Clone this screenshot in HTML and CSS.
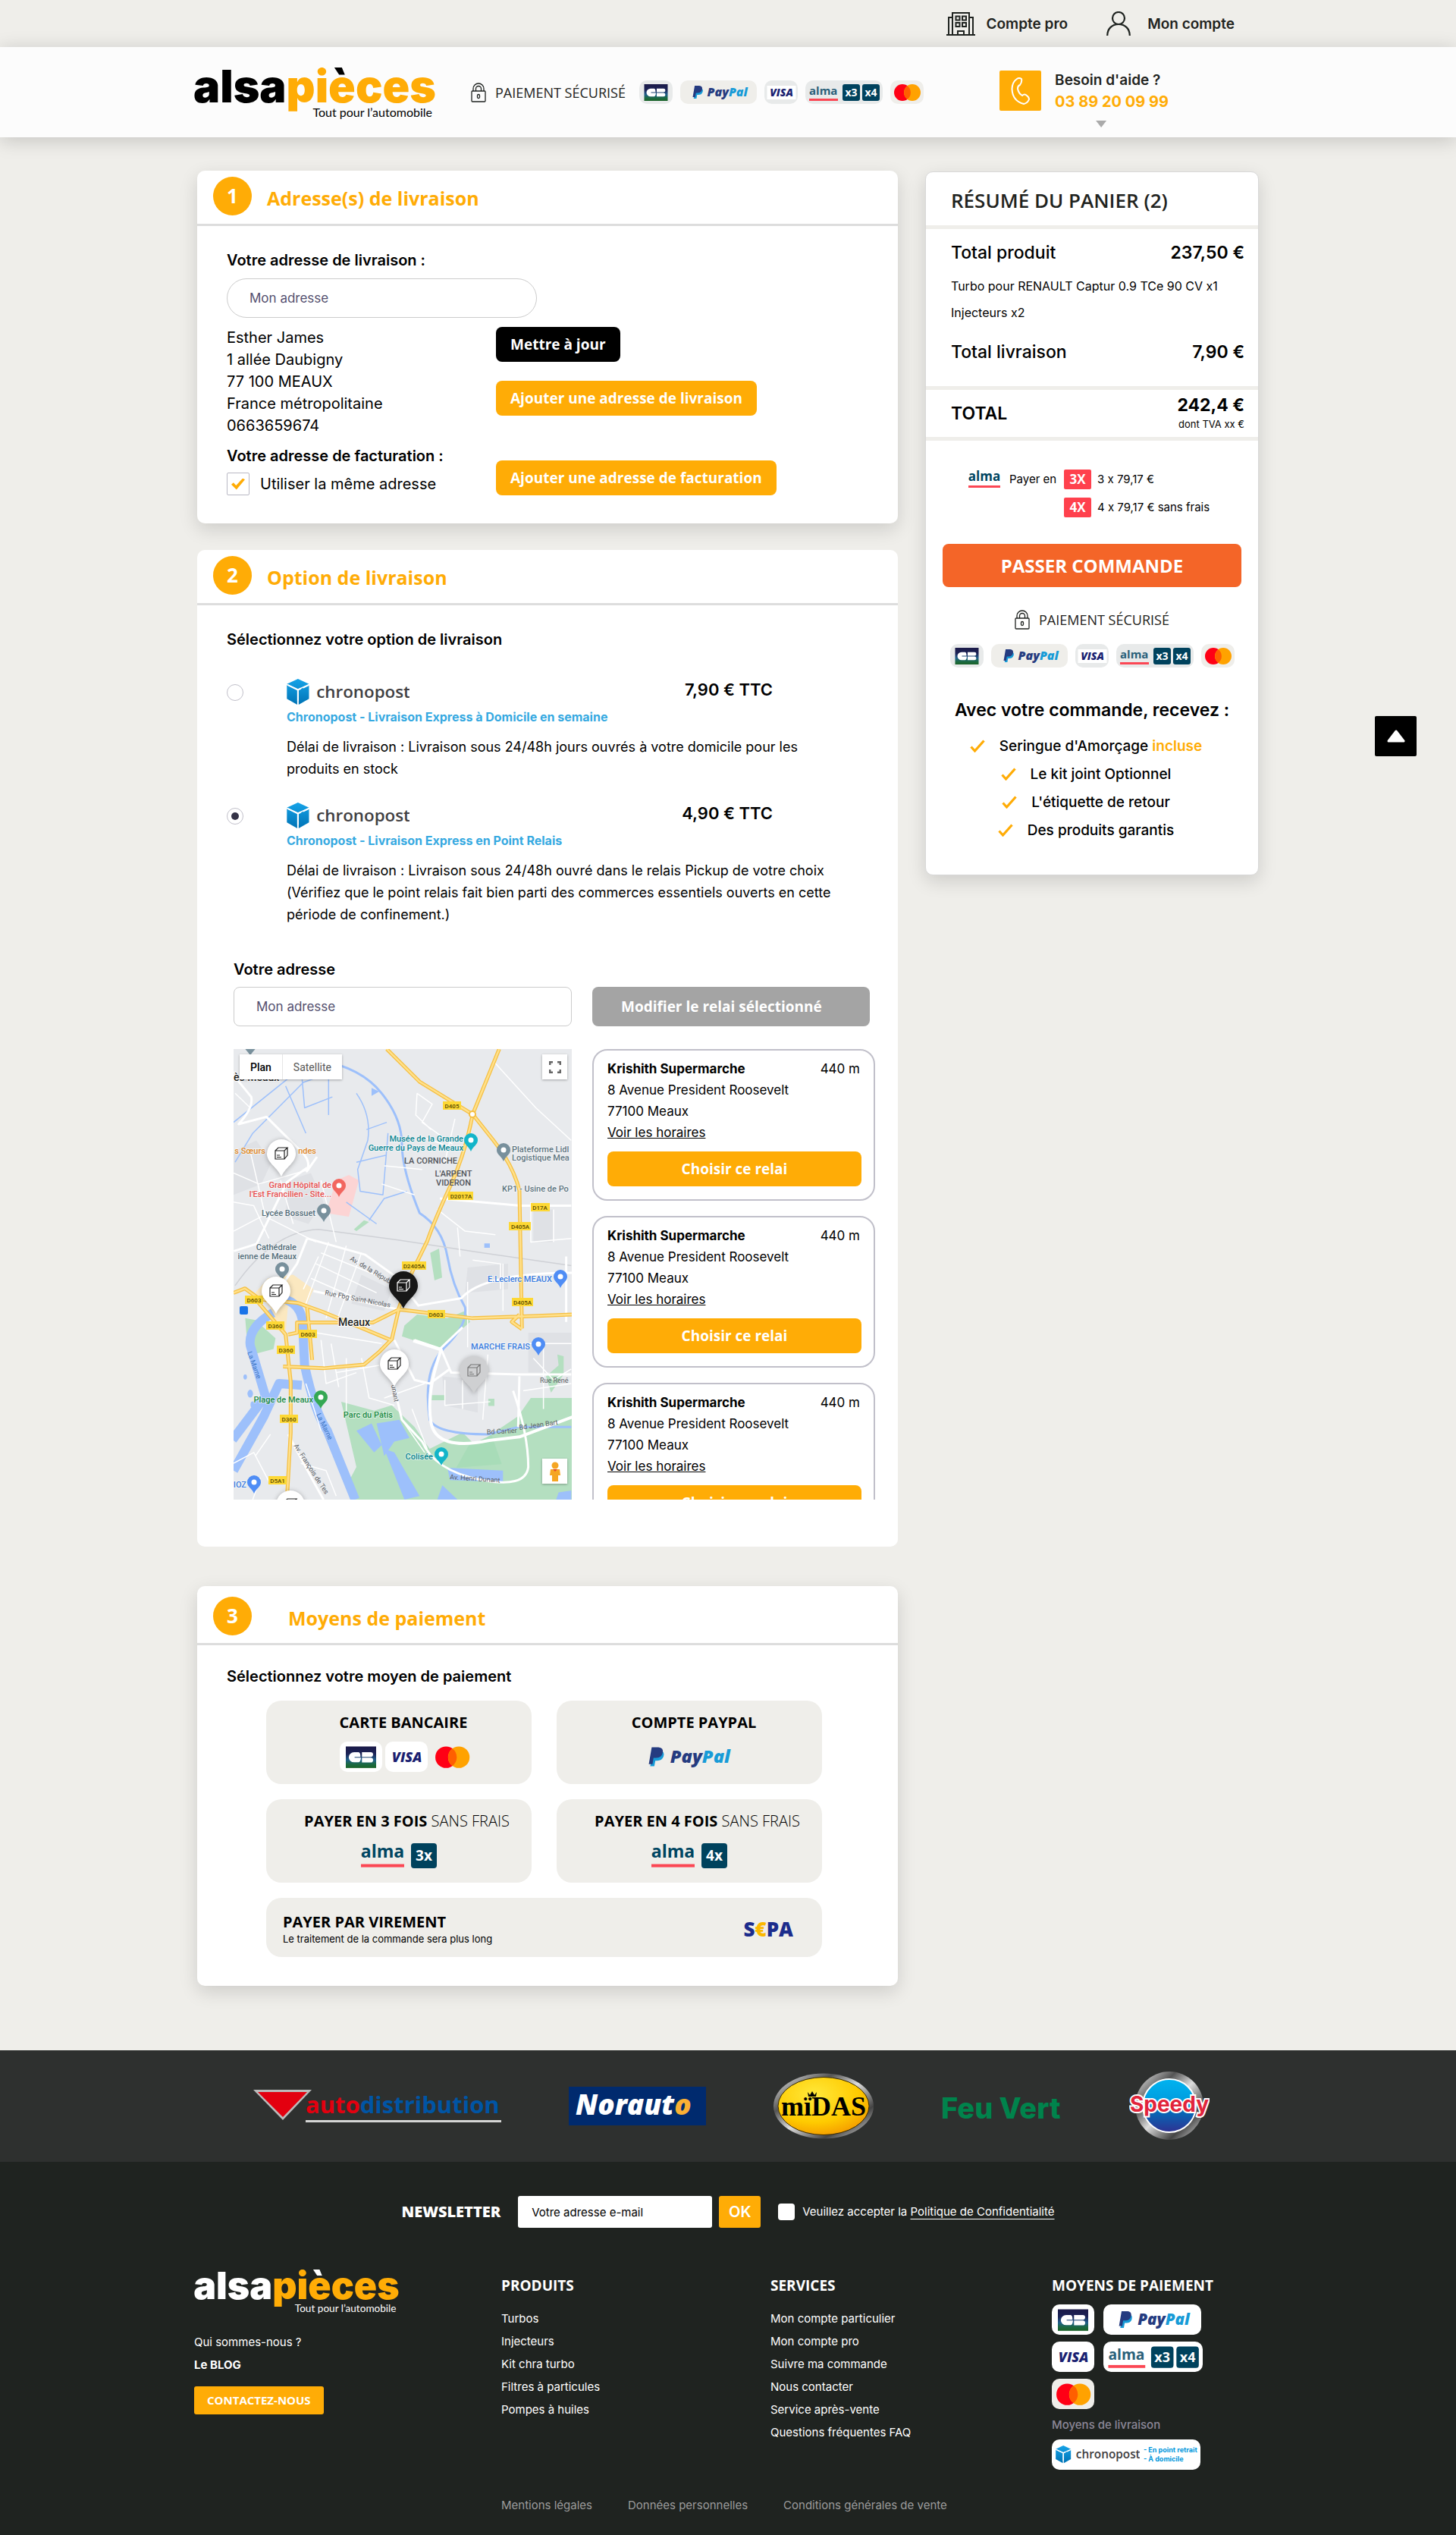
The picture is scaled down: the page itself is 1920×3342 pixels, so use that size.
FILE: index.html
```html
<!DOCTYPE html>
<html lang="fr">
<head>
<meta charset="utf-8">
<meta name="viewport" content="width=device-width, initial-scale=1">
<title>alsapièces – Commande</title>
<link rel="stylesheet" href="styles.css">
</head>
<body>

<svg class="paints" aria-hidden="true">
  <defs>
    <linearGradient id="cb-bg" x1="0" y1="0" x2="0" y2="1">
      <stop offset="0" stop-color="#1b1a48"/><stop offset=".35" stop-color="#1c2357"/><stop offset=".62" stop-color="#1f5f8b"/><stop offset=".82" stop-color="#1c6a44"/><stop offset="1" stop-color="#1a6327"/>
    </linearGradient>
    <linearGradient id="cube" x1="0" y1="0" x2="0" y2="1">
      <stop offset="0" stop-color="#15a3e8"/><stop offset="1" stop-color="#0073b5"/>
    </linearGradient>
    <linearGradient id="chrome" x1="0" y1="0" x2="1" y2="1">
      <stop offset="0" stop-color="#fafafa"/><stop offset=".3" stop-color="#555"/><stop offset=".5" stop-color="#ddd"/><stop offset=".75" stop-color="#444"/><stop offset="1" stop-color="#eee"/>
    </linearGradient>
    <radialGradient id="midas" cx=".4" cy=".3" r=".8">
      <stop offset="0" stop-color="#ffe83b"/><stop offset=".6" stop-color="#ffcb00"/><stop offset="1" stop-color="#f29100"/>
    </radialGradient>
    <linearGradient id="speedy" x1="0" y1="0" x2="0" y2="1">
      <stop offset="0" stop-color="#00b3f0"/><stop offset=".5" stop-color="#0098db"/><stop offset=".56" stop-color="#0071bc"/><stop offset="1" stop-color="#2e3192"/>
    </linearGradient>
    <!-- The grave accent of the logo takes the colour of "alsa" -->
    <linearGradient id="grave-dark" gradientUnits="userSpaceOnUse" x1="0" y1="0" x2="0" y2="100">
      <stop offset=".16" stop-color="#000"/><stop offset=".16" stop-color="#ffac06"/>
    </linearGradient>
    <linearGradient id="grave-light" gradientUnits="userSpaceOnUse" x1="0" y1="0" x2="0" y2="100">
      <stop offset=".16" stop-color="#fff"/><stop offset=".16" stop-color="#ffac06"/>
    </linearGradient>
  </defs>
</svg>
<svg class="sprite" aria-hidden="true">
  <symbol id="cb" viewBox="0 0 43 31">
    <rect x="6" y="5" width="31" height="22" fill="url(#cb-bg)"/>
    <path fill="#fff" d="M9 16a5.500 5.200 0 0 1 5.500-5.200H19q2 0 2 4.800H15v.9h6.500q-.5 4.700-2.500 4.700h-4.500A5.500 5.200 0 0 1 9 16zM22.500 10.800h9a2.400 2.400 0 0 1 0 4.800h-9zM22.500 16.500h9a2.400 2.400 0 0 1 0 4.800h-9z"/>
  </symbol>
  <symbol id="paypal" viewBox="0 0 100 31">
    <path fill="#179bd7" d="M21 10h5.500q4 1 2.500 5.500-1.400 3.500-5.500 3.500h-1.700L20.900 24h-3.700z"/>
    <path fill="#253b80" d="M18.600 7h6q4.600.4 3.800 4.800-1 4.700-5.900 4.700h-2.300L19.300 22H16z"/>
    <text x="35" y="21" class="pp-text"><tspan fill="#253b80">Pay</tspan><tspan fill="#179bd7">Pal</tspan></text>
  </symbol>
  <symbol id="visa" viewBox="0 0 43 31">
    <rect x="3" y="7" width="38" height="18" fill="#fff"/>
    <text x="22" y="21" text-anchor="middle" class="visa-text">VISA</text>
  </symbol>
  <symbol id="alma34" viewBox="0 0 102 31">
    <text x="5" y="19" class="alma-small">alma</text>
    <rect x="5" y="24" width="38" height="3" fill="#fb4754"/>
    <rect x="49" y="5" width="23" height="22" rx="3" fill="#00425d"/>
    <rect x="75" y="5" width="23" height="22" rx="3" fill="#00425d"/>
    <text x="60.500" y="21" text-anchor="middle" class="alma-times">x3</text>
    <text x="86.500" y="21" text-anchor="middle" class="alma-times">x4</text>
  </symbol>
  <symbol id="mastercard" viewBox="0 0 43 31">
    <circle cx="15.500" cy="16" r="11" fill="#ff0015"/><circle cx="28.500" cy="16" r="11" fill="#ffa200"/>
    <path d="M22 7.200a11 11 0 0 1 0 17.600 11 11 0 0 1 0-17.600z" fill="#ff5f00"/>
  </symbol>
  <symbol id="alma" viewBox="0 0 42 25">
    <text x="21" y="15" text-anchor="middle" class="alma-word">alma</text>
    <rect y="21" width="42" height="3" fill="#fb4754"/>
  </symbol>
  <symbol id="chronopost" viewBox="0 0 166 36">
    <path fill="url(#cube)" d="M15 0l15 7-15 6.500L0 7zM0 8.500l14 6.500v20L0 27zM30 8.500v18.500L16 35V15z"/>
    <path d="M1 8l14 7v15M15 15l4-2M22 12l8-4" fill="none" stroke="#fff" stroke-width="2"/>
    <text x="40" y="26" class="chrono-text">chronopost</text>
  </symbol>
  <symbol id="lock" viewBox="0 0 20 26">
    <g fill="none" stroke="#1f2320" stroke-width="1.300"><rect x="1" y="11" width="18" height="14" rx="1"/><path d="M3 11V8a7 7 0 0 1 14 0v3M6.500 11V8a3.500 3.500 0 0 1 7 0v3"/><rect x="8.500" y="15.500" width="3" height="5" rx="1.500"/></g>
  </symbol>
  <symbol id="tick" viewBox="0 0 20 17">
    <path d="M1.500 9.500l5 5.500L18.500 1.500" fill="none" stroke="#ffac06" stroke-width="3.200"/>
  </symbol>
  <symbol id="logo" viewBox="0 0 324 73">
    <text x="-1" y="50" class="logo-text"><tspan fill="currentColor">alsa</tspan><tspan fill="#ffac06">pi</tspan><tspan class="logo-grave">è</tspan><tspan fill="#ffac06">ces</tspan></text>
    <text x="314" y="69" text-anchor="end" class="logo-tag">Tout pour l’automobile</text>
  </symbol>
  <symbol id="parcel" viewBox="0 0 40 52">
    <path d="M20 1a19 19 0 0 1 19 19c0 12-13 17-19 30C14 37 1 32 1 20A19 19 0 0 1 20 1z"/>
    <g fill="none" stroke="currentColor" stroke-width="1.200"><path d="M12 16h12v11H12zM12 16l4-4h12l-4 4M28 12v10l-4 5M14 22h4M14 24.500h6"/></g>
  </symbol>
  <symbol id="poi" viewBox="0 0 18 24"><path d="M9 0a9 9 0 0 1 9 9c0 6-6 8-9 15C6 17 0 15 0 9a9 9 0 0 1 9-9z"/><circle cx="9" cy="9" r="3.500" fill="#fff"/></symbol>
</svg>

<div class="topbar">
  <nav class="wrap topbar__nav" aria-label="Comptes">
    <a href="#" class="topbar__link">
      <svg width="38" height="31" viewBox="0 0 38 31" fill="none" stroke="#1f2320" stroke-width="2"><path d="M0 30h38M8 30V1h22v29M3 30V7h5M30 7h5v23M15 30v-5h8v5M12.500 5.500h5v5h-5zM21 5.500h5v5h-5zM12.500 14h5v5h-5zM21 14h5v5h-5z"/></svg>
      Compte pro
    </a>
    <a href="#" class="topbar__link">
      <svg class="topbar__user" width="32" height="32" viewBox="0 0 32 32" fill="none" stroke="#1f2320" stroke-width="2.200"><circle cx="16" cy="9" r="8"/><path d="M1.200 32c0-9 6-15 14.800-15s14.800 6 14.800 15"/></svg>
      Mon compte
    </a>
  </nav>
</div>

<header class="header">
  <div class="wrap header__row">
    <a href="#" class="logo" aria-label="alsapièces"><svg width="324" height="73"><use href="#logo"/></svg></a>
    <div class="secure">
      <span class="secure__label"><svg width="20" height="26"><use href="#lock"/></svg>PAIEMENT SÉCURISÉ</span>
      <span class="badges">
        <span class="badge"><svg width="44" height="31"><use href="#cb"/></svg></span>
        <span class="badge badge--warm"><svg width="101" height="31"><use href="#paypal"/></svg></span>
        <span class="badge"><svg width="44" height="31"><use href="#visa"/></svg></span>
        <span class="badge"><svg width="102" height="31"><use href="#alma34"/></svg></span>
        <span class="badge badge--warm"><svg width="44" height="31"><use href="#mastercard"/></svg></span>
      </span>
    </div>
    <div class="help">
      <span class="help__icon"><svg width="26" height="36" viewBox="0 0 26 36" fill="none" stroke="#fff" stroke-width="2"><path d="M8 2q3-2 6 0 1 4-2 8-3 1-3 5 1 6 6 9 3-3 6 0 3 2 3 5-2 5-7 6Q2 31 1.500 15 2 6 8 2z"/></svg></span>
      <div class="help__text">
        <span>Besoin d'aide ?</span>
        <a href="tel:+33389200999" class="help__phone">03 89 20 09 99</a>
        <span class="help__arrow"></span>
      </div>
    </div>
  </div>
</header>

<main class="checkout">
  <div class="steps">

    <section class="card card--raised">
      <header class="card__head"><span class="card__num">1</span><h2 class="card__title">Adresse(s) de livraison</h2></header>
      <div class="card__body address">
        <label class="label" for="ship">Votre adresse de livraison :</label>
        <input class="field field--pill" id="ship" type="text" placeholder="Mon adresse">
        <div class="address__row">
          <address class="address__lines">Esther James<br>1 allée Daubigny<br>77 100 MEAUX<br>France métropolitaine<br>0663659674</address>
          <div class="address__actions">
            <button type="button" class="btn btn--dark">Mettre à jour</button>
            <button type="button" class="btn">Ajouter une adresse de livraison</button>
          </div>
        </div>
        <div class="address__row address__row--end">
          <div>
            <h3 class="label">Votre adresse de facturation :</h3>
            <label class="same"><input type="checkbox" class="tickbox" checked>Utiliser la même adresse</label>
          </div>
          <button type="button" class="btn">Ajouter une adresse de facturation</button>
        </div>
      </div>
    </section>

    <section class="card">
      <header class="card__head"><span class="card__num">2</span><h2 class="card__title">Option de livraison</h2></header>
      <div class="card__body">
        <h3 class="label">Sélectionnez votre option de livraison</h3>
        <div class="options">
          <label class="option">
            <input type="radio" name="carrier" class="radio">
            <span class="option__content">
              <span class="option__top"><svg width="162" height="35"><use href="#chronopost"/></svg><b class="option__price">7,90 € TTC</b></span>
              <span class="option__name">Chronopost - Livraison Express à Domicile en semaine</span>
              <span class="option__desc">Délai de livraison : Livraison sous 24/48h jours ouvrés à votre domicile pour les produits en stock</span>
            </span>
          </label>
          <label class="option">
            <input type="radio" name="carrier" class="radio" checked>
            <span class="option__content">
              <span class="option__top"><svg width="162" height="35"><use href="#chronopost"/></svg><b class="option__price">4,90 € TTC</b></span>
              <span class="option__name">Chronopost - Livraison Express en Point Relais</span>
              <span class="option__desc">Délai de livraison : Livraison sous 24/48h ouvré dans le relais Pickup de votre choix (Vérifiez que le point relais fait bien parti des commerces essentiels ouverts en cette période de confinement.)</span>
            </span>
          </label>
        </div>

        <div class="relay">
          <div class="relay__search">
            <label class="label" for="relay-address">Votre adresse</label>
            <input class="field" id="relay-address" type="text" placeholder="Mon adresse">
          </div>
          <button type="button" class="btn btn--muted">Modifier le relai sélectionné</button>

          <div class="map">
            <svg class="map__canvas" viewBox="0 0 446 594" preserveAspectRatio="xMidYMid slice" role="img" aria-label="Carte de Meaux">
              <rect width="446" height="594" fill="#e8eaed"/>
              <g class="map__geo" transform="matrix(.3333 0 0 .4783 -18 -133)">
                <g fill="#dfe1e5">
                  <path d="M54 560l90-30 60 60-40 60-110 30zM270 640l90-20 50 80-60 60-90-20zM1240 720h80v90h-80zM980 880l160-10v70l-170 10zM1220 1060h170v110h-170zM880 1180l140 10v90l-130-20zM560 900l120 40-30 60-130-20z"/>
                </g>
                <path fill="#fcd4d4" d="M460 640l50-15 40 15-40 100-90-10z"/>
                <path fill="#fbe8c0" d="M190 910l100-10 80 40-30 50-70-10-10 80-50-10-10-60-60-40z"/>
                <g fill="#b4dfc0">
                  <path d="M730 1040l50-30 120 10 70-20 20 30-80 50-40 25-150-35zM480 1250l130 25 70-15 90 60 60 60 130-45 50 35 170-80 50-50h162v320H540l-30-90 30-40zM832 840l35-12 12 80-30 8zM100 1020l40 5 80 50-8 30-100 18zM530 775l40-25 20 5-50 25zM1290 1180l50-30-5-30 25 5v50l-50 50zM838 1232h50v14h-50zM1062 1242h24v20h-24z"/>
                </g>
                <path fill="#a8dcb8" d="M985 1370l90-28 40 80-180 10z"/>
                <g fill="none" stroke="#9dc0fb">
                  <path stroke-width="12" d="M265 970q55 15 62 60l8 120q40 130 90 180l110 190"/>
                  <path stroke-width="12" d="M210 1005q-100 40-90 90l60 140-130 120M54 1440l120-150 60-90 90 5"/>
                  <path stroke-width="3" d="M400 310q160 20 240 90t80 140 70 190q90 40 110 120t70 140q10 50-80 110t-60 200q30 40 230 40l120-20h210"/>
                  <path stroke-width="1.500" d="M60 590l70-80 200-140 80-20M54 480l250-140M260 380l80 130M325 360l10 80 110-30M430 340v120M540 400q60 60 45 130l-40 80 10 60 90 10 20-170M540 590l120-20M580 500l80-20M590 750l60-60 90-20M500 700l120 60"/>
                </g>
                <g fill="#9dc0fb"><path d="M540 1330l60-20 40 60-30 20zM620 1310l90-10 40 50-60 10-40 40zM650 1380l40 10 100 120-60 10zM900 1432l220 8v32l-210-6zM880 1480l60 40H860zM1340 1500l50-5v25h-60zM600 385l30 10-30 12zM1046 814h22v12h-22z"/><circle cx="120" cy="1228" r="11"/><circle cx="130" cy="1258" r="9"/><circle cx="100" cy="1182" r="7"/></g>
                <path fill="none" stroke="#cfd1d6" stroke-width="1.500" d="M60 930q150-150 330-155l320 30 330 35 350 35"/>
                <g fill="none" stroke="#fff">
                  <path stroke-width="1.500" d="M54 620l100 30 200-40M54 700l80 10 60 90M120 560l60 180 200 70M240 640l50 120M54 780l110-40M400 640l60 170M390 850l-60 90M430 810l-90 170M500 820l-80 200M560 840l-100 190M380 870l240 80M400 840l250 70M360 910l230 70M380 1060l260 30M400 1080l20 120 120-30M440 1090l30 120M500 1130v150M560 1130l30 110 100 20M460 1170l170-20M780 400l60 30-40 50 120 60M780 400l-5 60 60 40M930 470l-40 120M800 520l160 40M650 600l150 10M640 650l130 30M860 720l110 60 120 10M940 770l10 80M1000 860l110 10v70M980 920v180M1060 1120l-20 180M1120 870v130M1230 700v110l160-10M1320 720v90M1220 1090h170M1240 1130l80 60 70-30M1280 1080v190M1200 1220l190-20M890 1190v70l180-10M960 1190v80M720 1300l90 90M760 1270l60 110M650 1240l160-40M54 1420l80-30 60 80M120 1540l40-80M320 1420l100 20 40 70M200 1340l-60 60M340 1200l60 130M1080 310l170 130 140 90M60 400l60 40M280 300l60 60"/>
                  <path stroke-width="3" d="M54 350l70 60q10 30-50 75l110-20 130 90q50 30 30 60l40-40M345 605l-80 40-120 170-90 20M345 800l-40 70-60 60M370 945l330 50M345 800l230 45 120 60 90 80 170-20q90-70 440-70M870 690l320 20h200M870 1105l90-60M770 1080l105 25 40 65 270 5h205M690 1080l80 110 60 10 80-40M690 1210l30 90 80 60q50 80 230 105t190-35q0-90-60-210M270 1340l100 130 40 50M1185 1180l-5 140M1370 850v180"/>
                  <path stroke-width="4" d="M765 1082l110 25q-60 120-40 200t230 50l120-10 210-55"/>
                </g>
                <g fill="none">
                  <path stroke="#f5bf42" stroke-width="5" d="M660 278l130 90 210 90 80 70q80 70 105 140l10 380M1105 278l-105 180q-30 110-90 200t-90 150l-60 85-50 95-30 90-50 35-60 35-160 10-160-5M54 950l45-12 60 30 150 10 100 25 270 78M150 975l110 90 20 130v140l-15 185M345 990l20 145M700 995l300 25 200-5 192-5M270 1065l35-5v-28h300l100-35M1195 1050l-40-20 30-20"/>
                  <path stroke="#ffe08a" stroke-width="2.500" d="M660 278l130 90 210 90 80 70q80 70 105 140l10 380M1105 278l-105 180q-30 110-90 200t-90 150l-60 85-50 95-30 90-50 35-60 35-160 10-160-5M54 950l45-12 60 30 150 10 100 25 270 78M150 975l110 90 20 130v140l-15 185M345 990l20 145M700 995l300 25 200-5 192-5M270 1065l35-5v-28h300l100-35M1195 1050l-40-20 30-20"/>
                </g>
              </g>
              <circle cx="315" cy="86" r="4" fill="#fff" stroke="#f5bf42" stroke-width="2"/>
              <g fill="#fdd835"><rect x="276" y="69" width="24" height="11"/><rect x="283" y="188" width="33" height="11"/><rect x="392" y="203" width="25" height="11"/><rect x="363" y="228" width="29" height="11"/><rect x="222" y="280" width="32" height="11"/><rect x="367" y="328" width="28" height="11"/><rect x="256" y="344" width="23" height="11"/><rect x="15" y="325" width="24" height="11"/><rect x="43" y="359" width="24" height="11"/><rect x="86" y="370" width="24" height="11"/><rect x="57" y="391" width="24" height="11"/><rect x="61" y="482" width="24" height="11"/><rect x="46" y="563" width="24" height="11"/></g>
              <g class="map__road" text-anchor="middle"><text x="288" y="78">D405</text><text x="300" y="197">D2017A</text><text x="404" y="212">D17A</text><text x="378" y="237">D405A</text><text x="238" y="289">D2405A</text><text x="381" y="337">D405A</text><text x="267" y="353">D603</text><text x="27" y="334">D603</text><text x="55" y="368">D360</text><text x="98" y="379">D603</text><text x="69" y="400">D360</text><text x="73" y="491">D360</text><text x="58" y="572">D5A1</text></g>
              <g class="map__poi" text-anchor="end">
                <g fill="#0b8794"><text x="303" y="122">Musée de la Grande</text><text x="303" y="134">Guerre du Pays de Meaux</text><text x="263" y="541">Colisée</text></g>
                <g fill="#e8504f"><text x="129" y="183">Grand Hôpital de</text><text x="129" y="195">l'Est Francilien - Site...</text></g>
                <g fill="#546e7a"><text x="108" y="220">Lycée Bossuet</text><text x="83" y="265">Cathédrale</text><text x="83" y="277">ienne de Meaux</text></g>
                <g fill="#3b7de0"><text x="420" y="307">E.Leclerc MEAUX</text><text x="391" y="396">MARCHE FRAIS</text><text x="17" y="578">IOZ</text></g>
                <g fill="#1a8a43"><text x="105" y="466">Plage de Meaux</text><text x="210" y="486">Parc du Pâtis</text></g>
                <g fill="#e08a2a"><text x="42" y="138">s Sœurs</text><text x="109" y="138">ndes</text></g>
              </g>
              <g class="map__poi" fill="#5f7681"><text x="367" y="136">Plateforme Lidl</text><text x="367" y="147">Logistique Mea</text><text x="354" y="188">KP1 - Usine de Po</text></g>
              <g class="map__area" text-anchor="middle"><text x="260" y="151">LA CORNICHE</text><text x="290" y="168">L'ARPENT</text><text x="290" y="180">VIDERON</text></g>
              <g class="map__town"><text x="138" y="365">Meaux</text><text x="0" y="42">ès Meaux</text></g>
              <g class="map__street">
                <text transform="translate(153 278) rotate(31)">Av. de la Républi</text><text transform="translate(120 324) rotate(11)">Rue Fbg Saint-Nicolas</text>
                <text transform="translate(334 508) rotate(-3)">Bd Cartier</text><text transform="translate(377 502) rotate(-8)">Bd Jean Bart</text><text x="404" y="440">Rue René</text>
                <text transform="translate(285 567) rotate(4)">Av. Henri Dunant</text><text transform="translate(79 523) rotate(57)">Av. François de Tes</text><text transform="translate(208 443) rotate(80)">unant</text>
                <text transform="translate(18 400) rotate(70)" fill="#3b74c4">La Marne</text><text transform="translate(109 482) rotate(64)" fill="#3b74c4">La Marne</text>
              </g>
              <g class="map__markers">
                <g fill="#12b5c9"><use href="#poi" x="304" y="111" width="18" height="24"/><use href="#poi" x="265" y="525" width="18" height="24"/></g>
                <g fill="#78909c"><use href="#poi" x="347" y="124" width="18" height="24"/><use href="#poi" x="110" y="204" width="18" height="24"/><use href="#poi" x="55" y="281" width="18" height="24"/><use href="#poi" x="13" y="-15" width="18" height="24"/></g>
                <g fill="#4f8df5"><use href="#poi" x="422" y="291" width="18" height="24"/><use href="#poi" x="393" y="380" width="18" height="24"/><use href="#poi" x="18" y="562" width="18" height="24"/></g>
                <use href="#poi" x="130" y="171" width="18" height="24" fill="#f2665f"/><use href="#poi" x="106" y="450" width="18" height="24" fill="#34a853"/>
                <rect x="8" y="339" width="11" height="11" rx="2" fill="#1a73e8"/>
              </g>
              <g class="map__pins">
                <g fill="#fff" color="#222"><use href="#parcel" x="43" y="118" width="40" height="52"/><use href="#parcel" x="36" y="299" width="40" height="52"/><use href="#parcel" x="192" y="395" width="40" height="52"/><use href="#parcel" x="55" y="581" width="40" height="52"/></g>
                <use href="#parcel" x="204" y="292" width="40" height="52" fill="#171717" color="#fff"/>
                <use href="#parcel" x="297" y="404" width="40" height="52" fill="#cfd0d2" color="#777"/>
              </g>
            </svg>
            <div class="map__type"><button type="button" class="map__btn map__btn--on">Plan</button><button type="button" class="map__btn">Satellite</button></div>
            <button type="button" class="map__tool map__tool--full" aria-label="Plein écran"><svg width="16" height="16" viewBox="0 0 16 16" fill="none" stroke="#666" stroke-width="2.500"><path d="M1.200 5V1.200H5M11 1.200h3.800V5M14.800 11v3.800H11M5 14.800H1.200V11"/></svg></button>
            <button type="button" class="map__tool map__tool--person" aria-label="Street View"><svg width="16" height="26" viewBox="0 0 16 26" fill="#f5a623"><circle cx="8" cy="5" r="4.500"/><path d="M2 10h12l1 8h-3v8H4v-8H1z"/><path d="M5 10h6l-3 3z" fill="#e5432d"/></svg></button>
          </div>

          <div class="relay__list">
            <article class="point">
              <div class="point__top"><h4 class="point__name">Krishith Supermarche</h4><span>440 m</span></div>
              <p>8 Avenue President Roosevelt<br>77100 Meaux</p>
              <a href="#">Voir les horaires</a>
              <button type="button" class="btn point__btn">Choisir ce relai</button>
            </article>
            <article class="point">
              <div class="point__top"><h4 class="point__name">Krishith Supermarche</h4><span>440 m</span></div>
              <p>8 Avenue President Roosevelt<br>77100 Meaux</p>
              <a href="#">Voir les horaires</a>
              <button type="button" class="btn point__btn">Choisir ce relai</button>
            </article>
            <article class="point">
              <div class="point__top"><h4 class="point__name">Krishith Supermarche</h4><span>440 m</span></div>
              <p>8 Avenue President Roosevelt<br>77100 Meaux</p>
              <a href="#">Voir les horaires</a>
              <button type="button" class="btn point__btn">Choisir ce relai</button>
            </article>
          </div>
        </div>
      </div>
    </section>

    <section class="card card--raised card--payment">
      <header class="card__head card__head--wide"><span class="card__num">3</span><h2 class="card__title">Moyens de paiement</h2></header>
      <div class="card__body">
        <h3 class="label">Sélectionnez votre moyen de paiement</h3>
        <div class="methods">
          <button type="button" class="method">
            <span class="method__title">CARTE BANCAIRE</span>
            <span class="method__logos method__logos--cards">
              <span class="badge badge--white"><svg width="56" height="40"><use href="#cb"/></svg></span>
              <span class="badge badge--white"><svg width="56" height="40"><use href="#visa"/></svg></span>
              <svg width="56" height="40"><use href="#mastercard"/></svg>
            </span>
          </button>
          <button type="button" class="method">
            <span class="method__title">COMPTE PAYPAL</span>
            <span class="method__logos"><svg width="150" height="46" class="method__paypal"><use href="#paypal"/></svg></span>
          </button>
          <button type="button" class="method">
            <span class="method__title method__title--long">PAYER EN 3 FOIS <span class="method__light">SANS FRAIS</span></span>
            <span class="method__logos method__logos--alma"><svg width="57" height="34"><use href="#alma"/></svg><span class="times">3x</span></span>
          </button>
          <button type="button" class="method">
            <span class="method__title method__title--long">PAYER EN 4 FOIS <span class="method__light">SANS FRAIS</span></span>
            <span class="method__logos method__logos--alma"><svg width="57" height="34"><use href="#alma"/></svg><span class="times">4x</span></span>
          </button>
          <button type="button" class="method method--wire">
            <span><span class="method__title">PAYER PAR VIREMENT</span><span class="method__note">Le traitement de la commande sera plus long</span></span>
            <span class="sepa">S<i>€</i>PA</span>
          </button>
        </div>
      </div>
    </section>
  </div>

  <aside class="summary">
    <h2 class="summary__head">RÉSUMÉ DU PANIER (2)</h2>
    <div class="summary__block">
      <div class="sum"><span>Total produit</span><b>237,50 €</b></div>
      <p class="summary__item">Turbo pour RENAULT Captur 0.9 TCe 90 CV x1</p>
      <p class="summary__item">Injecteurs x2</p>
      <div class="sum sum--ship"><span>Total livraison</span><b>7,90 €</b></div>
    </div>
    <div class="summary__total">
      <b>TOTAL</b>
      <div><strong class="summary__amount">242,4 €</strong><small class="summary__tax">dont TVA xx €</small></div>
    </div>
    <div class="split">
      <svg width="42" height="25"><use href="#alma"/></svg><span>Payer en</span><b class="split__tag">3X</b><span>3 x 79,17 €</span>
      <b class="split__tag split__tag--second">4X</b><span>4 x 79,17 € sans frais</span>
    </div>
    <button type="button" class="order">PASSER COMMANDE</button>
    <span class="secure__label secure__label--center"><svg width="20" height="26"><use href="#lock"/></svg>PAIEMENT SÉCURISÉ</span>
    <span class="badges badges--center">
      <span class="badge"><svg width="44" height="31"><use href="#cb"/></svg></span>
      <span class="badge badge--warm"><svg width="101" height="31"><use href="#paypal"/></svg></span>
      <span class="badge"><svg width="44" height="31"><use href="#visa"/></svg></span>
      <span class="badge"><svg width="102" height="31"><use href="#alma34"/></svg></span>
      <span class="badge badge--warm"><svg width="44" height="31"><use href="#mastercard"/></svg></span>
    </span>
    <h3 class="gifts__title">Avec votre commande, recevez :</h3>
    <ul class="gifts">
      <li><svg width="20" height="17"><use href="#tick"/></svg><span>Seringue d'Amorçage <em>incluse</em></span></li>
      <li><svg width="20" height="17"><use href="#tick"/></svg>Le kit joint Optionnel</li>
      <li><svg width="20" height="17"><use href="#tick"/></svg>L'étiquette de retour</li>
      <li><svg width="20" height="17"><use href="#tick"/></svg>Des produits garantis</li>
    </ul>
  </aside>
</main>

<a href="#" class="to-top" aria-label="Haut de page"><svg width="24" height="17" viewBox="0 0 24 17"><path d="M12 2l10 13H2z" fill="#fff" stroke="#fff" stroke-width="3" stroke-linejoin="round"/></svg></a>

<section class="partners" aria-label="Partenaires">
  <svg width="328" height="44" viewBox="0 0 328 44"><path d="M0 0h77L39 40z" fill="#bbb"/><path d="M6 3h65L39 36z" fill="#e3000f"/><text x="69" y="31" class="ad-text"><tspan fill="#e3000f">auto</tspan><tspan fill="#0055a5">distribution</tspan></text><rect x="69" y="40" width="258" height="3" fill="#d5d5d5"/></svg>
  <svg width="181" height="51" viewBox="0 0 181 51"><rect width="181" height="51" fill="#002a6e"/><text x="9" y="37" class="norauto-text"><tspan fill="#fff">Noraut</tspan><tspan fill="#fbb034">o</tspan></text></svg>
  <svg width="134" height="87" viewBox="0 0 134 87"><ellipse cx="67" cy="43.500" rx="66" ry="43" fill="url(#chrome)"/><ellipse cx="67" cy="43.500" rx="60" ry="38" fill="url(#midas)" stroke="#3a2a00"/><path d="M46 25l3 4 3-5 3 5 3-4-1 6H47z"/><text x="67" y="56" text-anchor="middle" class="midas-text">mïDAS</text></svg>
  <svg width="160" height="40" viewBox="0 0 160 40"><text x="0" y="36" class="feu-text">Feu Vert</text></svg>
  <svg width="106" height="93" viewBox="0 0 106 93"><circle cx="53" cy="46" r="45" fill="url(#chrome)"/><circle cx="53" cy="46" r="35" fill="url(#speedy)" stroke="#fff" stroke-width="2"/><text x="53" y="54" text-anchor="middle" class="speedy-text">Speedy</text></svg>
</section>

<footer class="footer">
  <form class="news">
    <label class="news__title" for="mail">NEWSLETTER</label>
    <input class="news__field" id="mail" type="email" placeholder="Votre adresse e-mail">
    <button type="button" class="news__ok">OK</button>
    <input class="news__check" id="terms" type="checkbox">
    <label for="terms" class="news__terms">Veuillez accepter la <a href="#">Politique de Confidentialité</a></label>
  </form>
  <div class="wrap footer__cols">
    <div class="footer__brand">
      <svg width="275" height="62"><use href="#logo"/></svg>
      <a href="#">Qui sommes-nous ?</a>
      <a href="#"><b>Le BLOG</b></a>
      <a href="#" class="footer__contact">CONTACTEZ-NOUS</a>
    </div>
    <nav class="footer__col" aria-label="Produits">
      <h2 class="footer__title">PRODUITS</h2>
      <a href="#">Turbos</a><a href="#">Injecteurs</a><a href="#">Kit chra turbo</a><a href="#">Filtres à particules</a><a href="#">Pompes à huiles</a>
    </nav>
    <nav class="footer__col" aria-label="Services">
      <h2 class="footer__title">SERVICES</h2>
      <a href="#">Mon compte particulier</a><a href="#">Mon compte pro</a><a href="#">Suivre ma commande</a><a href="#">Nous contacter</a><a href="#">Service après-vente</a><a href="#">Questions fréquentes FAQ</a>
    </nav>
    <div class="footer__col">
      <h2 class="footer__title footer__title--tight">MOYENS DE PAIEMENT</h2>
      <div class="footer__badges">
        <span class="badge badge--white"><svg width="56" height="40"><use href="#cb"/></svg></span>
        <span class="badge badge--white"><svg width="129" height="40"><use href="#paypal"/></svg></span>
        <span class="badge badge--white"><svg width="56" height="40"><use href="#visa"/></svg></span>
        <span class="badge badge--white"><svg width="131" height="40"><use href="#alma34"/></svg></span>
        <span class="badge badge--warm"><svg width="56" height="40"><use href="#mastercard"/></svg></span>
      </div>
      <h3 class="footer__sub">Moyens de livraison</h3>
      <div class="ship"><svg width="111" height="24"><use href="#chronopost"/></svg><span>- En point retrait<br>- À domicile</span></div>
    </div>
    <nav class="legal" aria-label="Informations légales"><a href="#">Mentions légales</a><a href="#">Données personnelles</a><a href="#">Conditions générales de vente</a></nav>
  </div>
</footer>
</body>
</html>
```
FILE: styles.css
```css
:root {
  --orange: #ffac06;
  --sand: #efeeea;
  --ink: #1f2320;
  --text: "Inter", "Liberation Sans", sans-serif;
  --display: "Open Sans", "Noto Sans", sans-serif;
}

*, *::before, *::after { box-sizing: border-box; }

body {
  margin: 0;
  background: var(--sand);
  color: #000;
  font: 400 20px/29px var(--text);
  font-feature-settings: "calt" 0;
}

h2, h3, h4, p, ul { margin: 0; padding: 0; }
ul { list-style: none; }
a { color: inherit; }
button, input { font-family: inherit; margin: 0; }
button { cursor: pointer; border: 0; }
svg { display: block; flex-shrink: 0; }

.paints { position: absolute; width: 0; height: 0; }
.sprite { display: none; }
.wrap { width: 100%; max-width: 1408px; margin: 0 auto; }

/* Text inside the logos */
.logo-text { font: 900 59px "Inter", sans-serif; }
.logo-grave { fill: var(--grave); }
.logo-tag { font: 400 16px "Lato", sans-serif; fill: currentColor; }
.pp-text { font: italic 800 16px var(--display); }
.visa-text { font: italic 800 14px var(--display); fill: #1a1f71; }
.alma-small { font: 700 15px var(--display); fill: #2a6079; }
.alma-times { font: 700 14px var(--display); fill: #fff; }
.alma-word { font: 700 17px var(--display); fill: #004561; }
.chrono-text { font: 600 23px var(--display); fill: #414042; }
.ad-text { font: 700 31px var(--display); }
.norauto-text { font: italic 800 37px var(--display); }
.midas-text { font: 700 36px "Liberation Serif", serif; }
.feu-text { font: 800 38px "Inter", sans-serif; fill: #00834c; }
.speedy-text { font: 700 28px "Inter", sans-serif; fill: #e1243b; stroke: #fff; stroke-width: 4px; paint-order: stroke; }

/* Top bar and header */
.topbar__nav {
  display: flex;
  align-items: center;
  justify-content: flex-end;
  gap: 51px;
  height: 62px;
  padding-right: 36px;
}
.topbar__link {
  display: flex;
  align-items: center;
  gap: 14px;
  color: var(--ink);
  font-size: 19px;
  font-weight: 600;
  text-decoration: none;
}
.topbar__user { margin-right: 8px; }

.header {
  background: #fcfcfc;
  box-shadow: 0 4px 24px rgba(0, 0, 0, .18);
}
.header__row {
  display: flex;
  align-items: center;
  min-height: 119px;
}
.logo { --grave: url(#grave-dark); color: #000; }
.secure {
  display: flex;
  align-items: center;
  gap: 18px;
  margin-left: 41px;
}
.secure__label {
  display: flex;
  align-items: center;
  gap: 12px;
  color: var(--ink);
  font: 500 18px/26px var(--display);
  white-space: nowrap;
}
.secure__label--center { justify-content: center; margin-top: 30px; }
.badges { display: flex; gap: 10px; }
.badges--center { justify-content: center; margin-top: 19px; }
.badge {
  display: block;
  overflow: hidden;
  background: #e8eaea;
  border-radius: 10px;
}
.badge--warm { background: var(--sand); }
.badge--white { background: #fff; }

.help {
  display: flex;
  align-self: flex-start;
  gap: 18px;
  margin: 29px 0 0 auto;
  padding-right: 123px;
  color: var(--ink);
  font-weight: 600;
}
.help__icon {
  display: grid;
  place-items: center;
  width: 55px;
  height: 53px;
  margin-top: 2px;
  background: var(--orange);
  border-radius: 2px;
}
.help__text {
  display: flex;
  flex-direction: column;
  font-size: 19px;
  white-space: nowrap;
}
.help__phone {
  color: var(--orange);
  font-size: 20px;
  font-weight: 700;
  text-decoration: none;
}
.help__arrow {
  width: 14px;
  height: 9px;
  margin: 10px 0 0 54px;
  background: #aaa;
  clip-path: polygon(0 0, 100% 0, 50% 100%);
}

/* Checkout grid */
.checkout {
  display: grid;
  grid-template-columns: minmax(0, 924fr) minmax(0, 440fr);
  align-items: start;
  gap: 36px;
  max-width: 1400px;
  margin: 0 auto;
  padding: 44px 0 85px;
}
.steps { display: grid; gap: 35px; }

.card {
  background: #fff;
  border-radius: 10px;
}
.card--raised, .summary { box-shadow: 0 8px 24px rgba(0, 0, 0, .14); }
.card--payment { margin-top: 17px; }
.card__head {
  display: flex;
  align-items: flex-start;
  gap: 20px;
  height: 73px;
  padding: 8px 21px 0;
  border-bottom: 3px solid #ddd;
}
.card__head--wide { gap: 48px; height: 78px; padding-top: 14px; }
.card__num {
  display: grid;
  place-items: center;
  width: 51px;
  height: 51px;
  flex-shrink: 0;
  border-radius: 50%;
  background: var(--orange);
  color: #fff;
  font: 700 26px/51px var(--display);
}
.card__title {
  padding-top: 11px;
  color: var(--orange);
  font: 700 25px/34px var(--display);
}
.card__body { padding: 33px 30px 37px 39px; }

.label { display: block; font-size: 20px; font-weight: 600; line-height: 24px; }

.field {
  display: block;
  width: 100%;
  height: 52px;
  padding: 0 29px;
  border: 1px solid #ccc;
  border-radius: 8px;
  background: #fff;
  color: #54506f;
  font-size: 17px;
}
.field::placeholder { color: #54506f; opacity: 1; }
.field--pill { max-width: 409px; margin-top: 12px; border-radius: 26px; }

.btn {
  height: 46px;
  padding: 0 19px;
  border-radius: 8px;
  background: var(--orange);
  color: #fff;
  font: 700 19px/26px var(--display);
}
.btn--dark { background: #000; }
.btn--muted {
  height: 52px;
  margin-right: 7px;
  padding-left: 38px;
  background: #a4a4a4;
  text-align: left;
}

/* Step 1 */
.address__row {
  display: grid;
  grid-template-columns: 355px 1fr;
  justify-items: start;
  margin-top: 12px;
}
.address__row--end { align-items: end; margin-top: 13px; }
.address__lines { font-style: normal; }
.address__actions {
  display: flex;
  flex-direction: column;
  align-items: flex-start;
  gap: 25px;
}
.same {
  display: flex;
  align-items: center;
  gap: 14px;
  height: 30px;
  margin-top: 10px;
}
.tickbox {
  display: grid;
  place-items: center;
  width: 30px;
  height: 30px;
  appearance: none;
  border: 1px solid #b9b8c4;
  border-radius: 2px;
  background: #fff;
}
.tickbox:checked::before {
  content: "";
  width: 18px;
  height: 15px;
  background: var(--orange);
  clip-path: polygon(0 55%, 16% 38%, 35% 64%, 84% 0, 100% 12%, 38% 100%);
}

/* Step 2 */
.options { display: grid; gap: 30px; margin-top: 40px; }
.option { display: grid; grid-template-columns: 22px 1fr; column-gap: 57px; }
.radio {
  display: grid;
  place-items: center;
  width: 22px;
  height: 22px;
  margin-top: 7px;
  appearance: none;
  border: 1px solid #c1c0ca;
  border-radius: 50%;
}
.radio:checked::before {
  content: "";
  width: 10px;
  height: 10px;
  border-radius: 50%;
  background: #353347;
}
.option__top {
  display: flex;
  align-items: flex-start;
  justify-content: space-between;
  max-width: 641px;
}
.option__price { font-size: 22px; font-weight: 600; }
.option__name {
  display: block;
  margin-top: 3px;
  color: #36a9e1;
  font-size: 16px;
  font-weight: 700;
  line-height: 24px;
}
.option__desc {
  display: block;
  max-width: 735px;
  margin-top: 13px;
  font-size: 18px;
}
.relay {
  display: grid;
  grid-template-columns: minmax(0, 446fr) minmax(0, 373fr);
  align-items: end;
  gap: 30px 27px;
  margin: 46px 0 25px;
  padding-left: 9px;
}
.relay__search .field { margin-top: 11px; }

.map { position: relative; height: 594px; overflow: hidden; }
.map__canvas { width: 100%; height: 100%; }
.map__geo path { vector-effect: non-scaling-stroke; stroke-linejoin: round; }
.map text { font-family: "Roboto", sans-serif; }
.map__poi text { font-size: 11px; font-weight: 500; stroke: #fff; stroke-width: 2px; stroke-opacity: .5; paint-order: stroke; }
.map__road text { font-size: 8px; font-weight: 500; fill: #5a4a00; }
.map__area text { font-size: 11px; font-weight: 500; fill: #50535a; }
.map__town text { font-size: 14px; font-weight: 500; fill: #222; stroke: #fff; stroke-width: 2px; paint-order: stroke; }
.map__street { fill: #5a5d63; font-size: 9px; }
.map__pins { filter: drop-shadow(0 1px 3px rgba(0, 0, 0, .3)); }
.map__type {
  position: absolute;
  top: 7px;
  left: 8px;
  display: flex;
  box-shadow: 0 1px 3px rgba(0, 0, 0, .3);
}
.map__btn {
  height: 33px;
  padding: 0 14px;
  background: #fff;
  color: #565656;
  font: 400 14px/20px "Roboto", sans-serif;
}
.map__btn--on { border-right: 1px solid #e6e6e6; color: #000; font-weight: 500; }
.map__tool {
  position: absolute;
  right: 6px;
  display: grid;
  place-items: center;
  width: 33px;
  height: 33px;
  padding: 0;
  background: #fff;
  box-shadow: 0 1px 3px rgba(0, 0, 0, .3);
}
.map__tool--full { top: 7px; }
.map__tool--person { bottom: 21px; }

.relay__list {
  display: flex;
  flex-direction: column;
  gap: 20px;
  height: 594px;
  overflow: hidden;
}
.point {
  flex-shrink: 0;
  padding: 10px 16px 17px 18px;
  border: 2px solid #c1c0ca;
  border-radius: 20px;
  font-size: 17px;
  line-height: 28px;
}
.point__top { display: flex; justify-content: space-between; padding-right: 2px; }
.point__name { font-size: 17px; font-weight: 700; }
.point a { display: block; width: fit-content; }
.point__btn { display: block; width: 100%; margin-top: 11px; }

/* Step 3 */
.card--payment .card__body { padding: 29px 100px 38px 39px; }
.methods {
  display: grid;
  grid-template-columns: 1fr 1fr;
  gap: 20px 33px;
  margin-top: 20px;
  padding-left: 52px;
}
.method {
  display: flex;
  flex-direction: column;
  align-items: center;
  height: 110px;
  padding: 16px 0 0 12px;
  border-radius: 20px;
  background: var(--sand);
  color: #000;
}
.method__title { display: block; font: 700 20px/26px var(--display); }
.method__title--long { padding-left: 9px; }
.method__light { font-weight: 300; }
.method__logos {
  display: flex;
  align-items: center;
  gap: 4px;
  height: 40px;
  margin-top: 12px;
}
.method__logos--cards { padding-left: 8px; }
.method__logos--alma { gap: 9px; margin-right: 12px; }
.method__paypal { margin-right: 18px; }
.times {
  width: 34px;
  height: 33px;
  border-radius: 4px;
  background: #00425d;
  color: #fff;
  font: 700 19px/33px var(--display);
}
.method--wire {
  grid-column: 1 / -1;
  flex-direction: row;
  justify-content: space-between;
  height: 78px;
  padding: 4px 38px 0 22px;
  text-align: left;
}
.method__note { display: block; font-size: 13px; line-height: 18px; }
.sepa { color: #1c2c8c; font: 800 26px/34px var(--display); }
.sepa i { color: #fbb800; font-style: normal; }

/* Basket summary */
.summary {
  margin-top: 1px;
  border: 1px solid #d8d8d8;
  border-radius: 10px;
  background: #fff;
}
.summary__head {
  padding: 19px 33px 15px;
  border-bottom: 5px solid var(--sand);
  color: var(--ink);
  font: 600 26px/36px var(--display);
}
.summary__block {
  padding: 16px 18px 30px 33px;
  border-bottom: 5px solid var(--sand);
}
.sum {
  display: flex;
  justify-content: space-between;
  margin-bottom: 17px;
  font-size: 23px;
  font-weight: 500;
  line-height: 30px;
}
.sum b { font-weight: 600; }
.sum--ship { margin: 25px 0 0; }
.summary__item { margin-bottom: 11px; font-size: 16px; line-height: 24px; }
.summary__total {
  display: flex;
  align-items: center;
  justify-content: space-between;
  padding: 6px 18px 6px 33px;
  border-bottom: 5px solid var(--sand);
  font-size: 23px;
  line-height: 28px;
  text-align: right;
}
.summary__total b { font-weight: 600; }
.summary__amount, .summary__tax { display: block; }
.summary__tax { font-size: 13px; line-height: 22px; }

.split {
  display: grid;
  grid-template-columns: 42px 60px 36px auto;
  align-items: center;
  gap: 10px 12px;
  padding: 37px 18px 0 56px;
  font-size: 15px;
  line-height: 27px;
  white-space: nowrap;
}
.split__tag {
  height: 26px;
  border-radius: 2px;
  background: #ff414d;
  color: #fff;
  font: 700 17px/26px var(--display);
  text-align: center;
}
.split__tag--second { grid-column: 3; }
.split__tag + span { margin-left: -4px; }
.order {
  display: block;
  width: calc(100% - 44px);
  height: 57px;
  margin: 35px auto 0;
  border-radius: 8px;
  background: #f46528;
  color: #fff;
  font: 700 24px/32px var(--display);
}
.gifts__title {
  margin-top: 41px;
  font-size: 23px;
  font-weight: 600;
  line-height: 30px;
  text-align: center;
}
.gifts {
  padding: 14px 16px 40px 0;
  font-size: 19px;
  font-weight: 500;
  line-height: 37px;
}
.gifts li {
  display: flex;
  align-items: center;
  justify-content: center;
  gap: 19px;
}
.gifts em { color: var(--orange); font-style: normal; font-weight: 600; }

.to-top {
  position: fixed;
  top: 944px;
  right: 52px;
  display: grid;
  place-items: center;
  width: 55px;
  height: 53px;
  border-radius: 2px;
  background: #000;
}

/* Partners and footer */
.partners {
  display: flex;
  align-items: center;
  justify-content: center;
  gap: 88px;
  min-height: 147px;
  padding: 0 20px 0 28px;
  background: #2e302f;
}
.footer {
  --grave: url(#grave-light);
  padding: 45px 0 26px;
  background: var(--ink);
  color: #fff;
  font-size: 15px;
  line-height: 30px;
}
.footer a { text-decoration: none; }
.news {
  display: flex;
  align-items: center;
  justify-content: center;
}
.news__title { margin-right: 23px; font: 800 20px/28px var(--display); }
.news__field {
  width: 256px;
  height: 42px;
  padding: 0 18px;
  border: 0;
  border-radius: 3px;
  background: #fff;
  color: #000;
  font-size: 15px;
}
.news__field::placeholder { color: #000; opacity: 1; }
.news__ok {
  width: 55px;
  height: 42px;
  margin: 0 23px 0 9px;
  padding: 0;
  border-radius: 3px;
  background: var(--orange);
  color: #fff;
  font-size: 20px;
  font-weight: 600;
}
.news__check {
  width: 22px;
  height: 22px;
  margin-right: 10px;
  appearance: none;
  border-radius: 4px;
  background: #fff;
}
.news__check:checked { background: var(--orange); }
.footer .news__terms a { text-decoration: underline; text-underline-offset: 4px; }

.footer__cols {
  display: grid;
  grid-template-columns: 405fr 355fr 371fr 277fr;
  margin-top: 52px;
}
.footer__brand, .footer__col {
  display: flex;
  flex-direction: column;
  align-items: flex-start;
}
.footer__brand svg { margin-bottom: 22px; }
.footer__col { padding-top: 11px; }
.footer__title { margin-bottom: 16px; font: 700 19px/26px var(--display); }
.footer__title--tight { margin-bottom: 12px; }
.footer__contact {
  margin-top: 13px;
  padding: 0 17px;
  border-radius: 3px;
  background: var(--orange);
  font: 700 15px/37px var(--display);
}
.footer__badges {
  display: flex;
  flex-wrap: wrap;
  gap: 9px 12px;
  width: 204px;
}
.footer__sub {
  margin: 10px 0 8px;
  color: #8b8797;
  font-size: 15px;
  font-weight: 500;
  line-height: 22px;
}
.ship {
  display: flex;
  align-items: center;
  gap: 5px;
  height: 40px;
  padding: 0 4px 0 5px;
  border-radius: 10px;
  background: #fff;
  color: #0097dc;
  font: 700 9px/12px var(--text);
  white-space: nowrap;
}
.legal {
  grid-column: 2 / -1;
  display: flex;
  gap: 47px;
  margin-top: 32px;
  color: #9b9b9b;
}

@media (max-width: 1420px) {
  .checkout { padding-right: 20px; padding-left: 20px; }
}
@media (max-width: 1100px) {
  .checkout { grid-template-columns: minmax(0, 1fr); }
  .header__row, .partners, .news { flex-wrap: wrap; }
  .footer__cols { grid-template-columns: 1fr 1fr; padding: 0 20px; }
  .legal { grid-column: 1 / -1; flex-wrap: wrap; }
}
```
